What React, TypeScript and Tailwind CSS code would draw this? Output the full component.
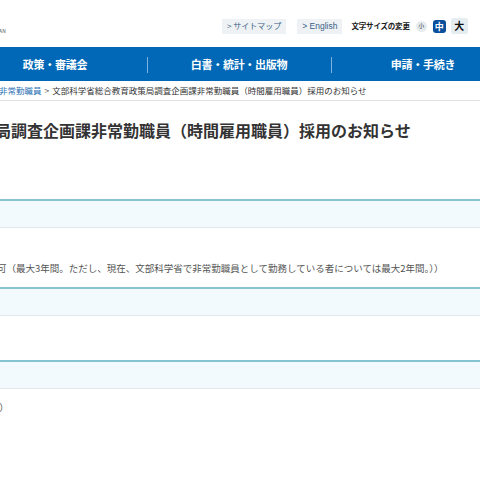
// MEXT recruitment notice page — cropped view of the right side of the layout.

const JP = "font-['Noto_Sans_CJK_JP','Noto_Sans',sans-serif]";

const NAV = ["政策・審議会", "白書・統計・出版物", "申請・手続き"];

function Band() {
  return <div className="h-[29px] border-t-2 border-[#86c4d2] border-b border-b-[#e1e7ea] bg-[#f2fafd]" />;
}

export default function App() {
  return (
    <div className={`w-[480px] h-[480px] overflow-hidden bg-white ${JP}`}>
      {/* top header */}
      <header className="h-[47px] flex items-start">
        <div className="w-[200px] pt-[28px] text-[5px] leading-none text-[#555] tracking-wider -ml-[1px]">AN</div>
        <div className="flex items-center pt-[18px] ml-[23px]">
          <span className="h-[15px] px-[5px] flex items-center bg-[#eef2f5] text-[8px] text-[#3a5f86] leading-none">
            &gt; サイトマップ
          </span>
          <span className="ml-[11px] h-[15px] px-[5px] flex items-center bg-[#eef2f5] text-[8.5px] text-[#3a5f86] leading-none font-['Liberation_Sans',sans-serif]">
            &gt; English
          </span>
          <div className="ml-[9px] flex items-center">
            <span className="text-[7.5px] font-bold text-[#222] leading-none tracking-tight whitespace-nowrap">文字サイズの変更</span>
            <span className="ml-[6px] w-[11px] h-[11px] rounded-full bg-[#e6ecef] text-[6px] text-[#333] flex items-center justify-center leading-none">小</span>
            <span className="ml-[6px] w-[13px] h-[13px] rounded-[3px] bg-[#0a4f9c] text-white text-[9px] font-bold flex items-center justify-center leading-none">中</span>
            <span className="ml-[5px] w-[17px] h-[16px] rounded-[2px] bg-[#e6edf1] text-[#111] text-[10px] font-bold flex items-center justify-center leading-none">大</span>
          </div>
        </div>
      </header>

      {/* global nav */}
      <nav className="h-[34px] bg-[#0068b6] flex -ml-[37px]">
        {NAV.map((label, i) => (
          <div key={label} className="w-[184px] shrink-0 flex items-center relative">
            {i > 0 && <span className="absolute left-0 top-[10px] h-[16px] w-px bg-[#7fb2dc]" />}
            <span className="flex-1 text-center text-white text-[11px] font-bold tracking-tight">{label}</span>
          </div>
        ))}
      </nav>

      {/* breadcrumb */}
      <div className="h-[20px] border-b border-[#dfe3e6] flex items-center text-[8.5px] leading-none whitespace-nowrap -ml-[1px]">
        <span className="text-[#2a6fb4]">非常勤職員</span>
        <span className="mx-[3px] text-[#666]">&gt;</span>
        <span className="text-[#333]">文部科学省総合教育政策局調査企画課非常勤職員（時間雇用職員）採用のお知らせ</span>
      </div>

      {/* title */}
      <h1 className="mt-[20px] -ml-[5px] text-[16px] leading-[18px] font-bold text-[#333] whitespace-nowrap">
        局調査企画課非常勤職員（時間雇用職員）採用のお知らせ
      </h1>

      <div className="mt-[60px]">
        <Band />
        <div className="h-[59px] pt-[6px] text-[9.5px] leading-[23px] text-[#555] whitespace-nowrap">
          <div className="-ml-[5px]">）</div>
          <div className="-ml-[3px]">可（最大3年間。ただし、現在、文部科学省で非常勤職員として勤務している者については最大2年間。））</div>
        </div>
        <Band />
        <div className="h-[44px]" />
        <Band />
        <div className="pt-[10px] text-[9.5px] leading-[16px] text-[#555] whitespace-nowrap -ml-[4px]">)）</div>
      </div>
    </div>
  );
}
